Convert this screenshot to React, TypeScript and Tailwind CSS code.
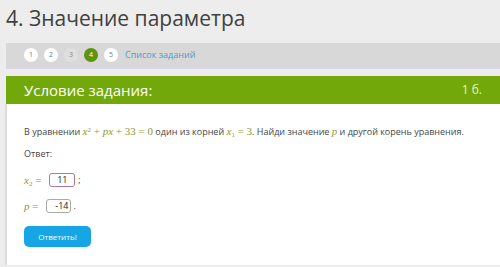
function V({ children }: { children: React.ReactNode }) {
  return <span className="italic">{children}</span>;
}

function M({ children }: { children: React.ReactNode }) {
  return (
    <span className="font-['Liberation_Serif',serif] text-[11px] text-[#8a9a35]">
      {children}
    </span>
  );
}

export default function App() {
  const steps = [1, 2, 3, 4, 5];
  return (
    <div className="h-[267px] w-[500px] overflow-hidden bg-[#ededed] font-['Open_Sans',sans-serif]">
      <div className="h-[43px] pl-[6px] pt-[3px] text-[21px] leading-[30px] text-[#404040]">
        4. Значение параметра
      </div>
      <div className="ml-[6px] flex h-[26px] items-center gap-[6px] border-b-2 border-[#dcd6ea] bg-[#d8d8d8] pl-[18px]">
        {steps.map((n) => (
          <div
            key={n}
            className={
              n === 4
                ? "flex h-[14px] w-[14px] items-center justify-center rounded-full bg-[#5f9410] text-[7px] text-white"
                : n === 3
                ? "flex h-[14px] w-[14px] items-center justify-center rounded-full bg-[#dfdfdf] text-[7px] text-[#888]"
                : "flex h-[14px] w-[14px] items-center justify-center rounded-full bg-white text-[7px] text-[#777]"
            }
          >
            {n}
          </div>
        ))}
        <span className="ml-[1px] text-[9px] text-[#4e9ad0]">Список заданий</span>
      </div>
      <div className="ml-[6px] mt-[7px] flex h-[28px] items-center justify-between bg-[#72a80a] pl-[18px] pr-[18px] text-white">
        <span className="text-[15px]">Условие задания:</span>
        <span className="text-[12px] text-[#e8f2c8]">1 б.</span>
      </div>
      <div className="ml-[5px] h-[161px] border-l-2 border-[#dcdcdc] bg-white pl-[17px] pt-[20px] text-[9px] text-[#444]">
        <div className="leading-[14px]">
          В уравнении{" "}
          <M>
            <V>x</V>
            <sup className="text-[7px]">2</sup> + <V>px</V> + 33 = 0
          </M>{" "}
          один из корней{" "}
          <M>
            <V>x</V>
            <sub className="text-[7px]">1</sub> = 3
          </M>
          . Найди значение{" "}
          <M>
            <V>p</V>
          </M>{" "}
          и другой корень уравнения.
        </div>
        <div className="mt-[8px] leading-[14px]">Ответ:</div>
        <div className="mt-[12px] flex items-center gap-[6px] leading-[14px]">
          <M>
            <V>x</V>
            <sub className="text-[7px]">2</sub> =
          </M>
          <span className="ml-[2px] flex h-[14px] w-[26px] items-center justify-center rounded-[3px] border border-[#b07898] text-[9px] text-[#222]">
            11
          </span>
          <span className="-ml-[3px]">;</span>
        </div>
        <div className="mt-[12px] flex items-center gap-[6px] leading-[14px]">
          <M>
            <V>p</V> =
          </M>
          <span className="ml-[2px] flex h-[14px] w-[25px] items-center justify-end rounded-[3px] border border-[#aaaaaa] pr-[2px] text-[9px] text-[#222]">
            -14
          </span>
          <span className="-ml-[4px]">.</span>
        </div>
        <button className="mt-[13px] h-[21px] w-[67px] rounded-[5px] bg-[#16a6e6] text-[8px] text-white">
          Ответить!
        </button>
      </div>
    </div>
  );
}
